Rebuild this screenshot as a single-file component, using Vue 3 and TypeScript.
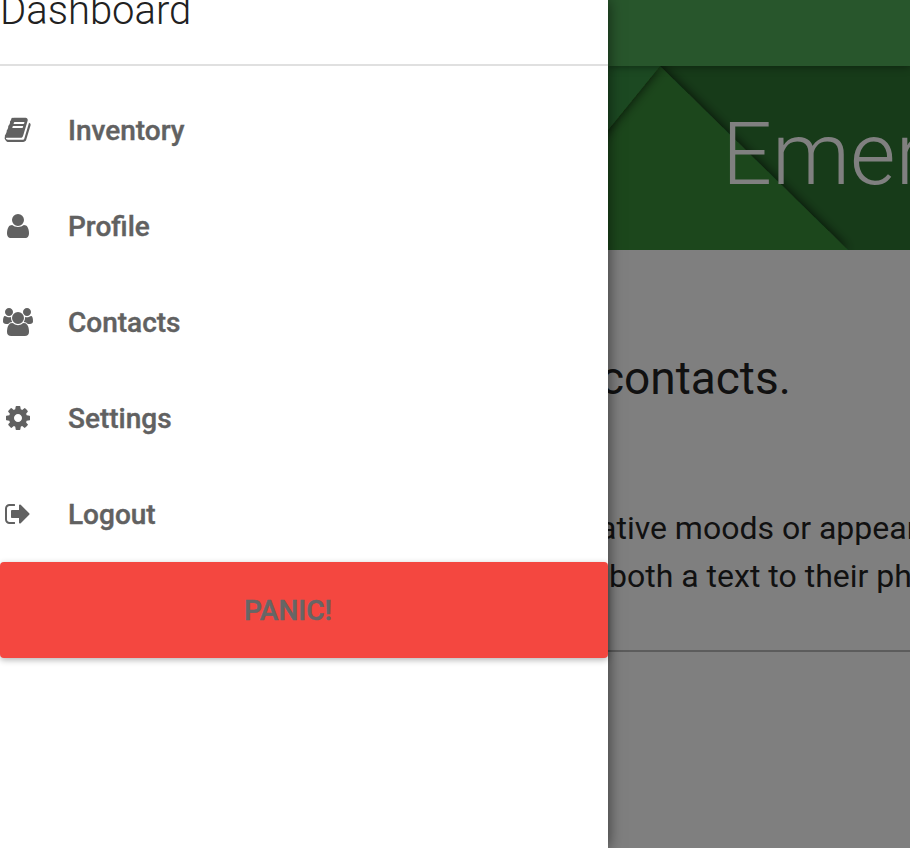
<script setup lang="ts">
interface NavItem {
  label: string;
  viewBox: string;
  path: string;
}

const navItems: NavItem[] = [
  {
    label: "Inventory",
    viewBox: "-40 0 1792 1792",
    path: "M1639 478q40 57 18 129l-275 906q-19 64-76.5 107.5t-122.5 43.5h-923q-77 0-148.5-53.5t-99.5-131.5q-24-67-2-127 2-30 7-64 2-20-1-41 2-11 8-21l33-47q23-38 45-91.5t30-91.5q3-10 .5-30t-.5-28q3-11 17-28t17-23q21-36 42-92t25-90q1-9-2.5-32t.5-28q4-13 22-30.5t22-22.5q19-26 42.5-84.5t27.5-96.5q1-8-3-25.5t-2-26.5q2-8 9-18t18-23 17-21q8-12 16.5-35.5t15-45 17-46.5 22-35.5 30-15.5 45 5.5l-1 3q38-9 51-9h761q74 0 114 56t18 130l-274 906q-36 119-71.5 153.5t-128.5 34.5h-869q-27 0-38 15-11 16-1 43 24 70 144 70h923q29 0 56-15.5t35-41.5l300-987q7-22 5-57 38 15 59 43zm-1064 2q-4 13 2 22.5t20 9.5h608q13 0 25.5-9.5t16.5-22.5l21-64q4-13-2-22.5t-20-9.5h-608q-13 0-25.5 9.5t-16.5 22.5zm-83 256q-4 13 2 22.5t20 9.5h608q13 0 25.5-9.5t16.5-22.5l21-64q4-13-2-22.5t-20-9.5h-608q-13 0-25.5 9.5t-16.5 22.5z",
  },
  {
    label: "Profile",
    viewBox: "0 0 1792 1792",
    path: "M1600 1399q0 109-62.5 187t-150.5 78h-982q-88 0-150.5-78t-62.5-187q0-85 8.5-160.5t31.5-152 58.5-131 94-89 134.5-34.5q150 128 377 128t377-128q76 0 134.5 34.5t94 89 58.5 131 31.5 152 8.5 160.5zm-320-887q0 159-112.5 271.5t-271.5 112.5-271.5-112.5-112.5-271.5 112.5-271.5 271.5-112.5 271.5 112.5 112.5 271.5z",
  },
  {
    label: "Contacts",
    viewBox: "0 0 1920 1792",
    path: "M593 896q-162 5-265 128h-134q-82 0-138-40.5t-56-118.5q0-353 124-353 6 0 43.5 21t97.5 42.5 119 21.5q67 0 133-23-5 37-5 66 0 139 81 256zm1071 637q0 120-73 189.5t-194 69.5h-874q-121 0-194-69.5t-73-189.5q0-53 3.5-103.5t14-109 26.5-108.5 43-97.5 62-81 85.5-53.5 111.5-20q10 0 43 21.5t73 48 107 48 135 21.5 135-21.5 107-48 73-48 43-21.5q61 0 111.5 20t85.5 53.5 62 81 43 97.5 26.5 108.5 14 109 3.5 103.5zm-1024-1277q0 106-75 181t-181 75-181-75-75-181 75-181 181-75 181 75 75 181zm704 384q0 159-112.5 271.5t-271.5 112.5-271.5-112.5-112.5-271.5 112.5-271.5 271.5-112.5 271.5 112.5 112.5 271.5zm576 225q0 78-56 118.5t-138 40.5h-134q-103-123-265-128 81-117 81-256 0-29-5-66 66 23 133 23 59 0 119-21.5t97.5-42.5 43.5-21q124 0 124 353zm-128-609q0 106-75 181t-181 75-181-75-75-181 75-181 181-75 181 75 75 181z",
  },
  {
    label: "Settings",
    viewBox: "0 0 1792 1792",
    path: "M1152 896q0-106-75-181t-181-75-181 75-75 181 75 181 181 75 181-75 75-181zm512-109v222q0 12-8 23t-20 13l-185 28q-19 54-39 91 35 50 107 138 10 12 10 25t-9 23q-27 37-99 108t-94 71q-12 0-26-9l-138-108q-44 23-91 38-16 136-29 186-7 28-36 28h-222q-14 0-24.5-8.5t-11.5-21.5l-28-184q-49-16-90-37l-141 107q-10 9-25 9-14 0-25-11-126-114-165-168-7-10-7-23 0-12 8-23 15-21 51-66.5t54-70.5q-27-50-41-99l-183-27q-13-2-21-12.5t-8-23.5v-222q0-12 8-23t19-13l186-28q14-46 39-92-40-57-107-138-10-12-10-24 0-10 9-23 26-36 98.5-107.5t94.5-71.5q13 0 26 10l138 107q44-23 91-38 16-136 29-186 7-28 36-28h222q14 0 24.5 8.5t11.5 21.5l28 184q49 16 90 37l142-107q9-9 24-9 13 0 25 10 129 119 165 170 7 8 7 22 0 12-8 23-15 21-51 66.5t-54 70.5q26 50 41 98l183 28q13 2 21 12.5t8 23.5z",
  },
  {
    label: "Logout",
    viewBox: "0 0 1792 1792",
    path: "M704 1440q0 4 1 20t.5 26.5-3 23.5-10 19.5-20.5 6.5h-320q-119 0-203.5-84.5t-84.5-203.5v-704q0-119 84.5-203.5t203.5-84.5h320q13 0 22.5 9.5t9.5 22.5q0 4 1 20t.5 26.5-3 23.5-10 19.5-20.5 6.5h-320q-66 0-113 47t-47 113v704q0 66 47 113t113 47h312l11.5 1 11.5 3 8 5.5 7 9 2 13.5zm928-544q0 26-19 45l-544 544q-19 19-45 19t-45-19-19-45v-288h-448q-26 0-45-19t-19-45v-384q0-26 19-45t45-19h448v-288q0-26 19-45t45-19 45 19l544 544q19 19 19 45z",
  },
];
</script>

<template>
  <div class="page">
    <aside class="drawer">
      <header class="drawer-header">
        <h1>Dashboard</h1>
      </header>
      <nav class="nav">
        <a v-for="item in navItems" :key="item.label" class="nav-item">
          <span class="nav-icon">
            <svg :viewBox="item.viewBox" height="28" fill="currentColor" aria-hidden="true">
              <path :d="item.path" />
            </svg>
          </span>
          {{ item.label }}
        </a>
      </nav>
      <button class="panic" type="button">PANIC!</button>
    </aside>

    <main class="main">
      <div class="toolbar"></div>
      <section class="hero">
        <svg class="hero-facets" viewBox="0 0 302 184" aria-hidden="true">
          <defs>
            <filter id="facet-shadow" x="-20%" y="-20%" width="140%" height="140%">
              <feDropShadow dx="0" dy="0" stdDeviation="6" flood-color="#000" flood-opacity="0.8" />
            </filter>
          </defs>
          <rect width="302" height="184" fill="#173b19" />
          <polygon points="-20,-10 52,0 240,184 -20,184" fill="#1c461f" filter="url(#facet-shadow)" />
          <polygon points="-20,-10 52,0 0,64 -20,88" fill="#1e4a21" filter="url(#facet-shadow)" />
        </svg>
        <h2 class="hero-title">Emer</h2>
      </section>
      <section class="content">
        <h3 class="lead">contacts.</h3>
        <p class="copy first">ative moods or appearance</p>
        <p class="copy second">both a text to their phone</p>
        <hr class="rule" />
      </section>
    </main>
  </div>
</template>

<style scoped>
.page {
  display: flex;
  width: 910px;
  height: 848px;
  overflow: hidden;
  font-family: Roboto, "Liberation Sans", sans-serif;
}

.drawer {
  position: relative;
  z-index: 2;
  flex: 0 0 608px;
  display: flex;
  flex-direction: column;
  background: #fff;
  box-shadow: 0 0 14px rgba(0, 0, 0, 0.6);
}

.drawer-header {
  display: flex;
  align-items: flex-end;
  height: 64px;
  border-bottom: 2px solid #e0e0e0;
  overflow: hidden;
}

.drawer-header h1 {
  flex: none;
  margin: 0 0 30px;
  font-size: 40px;
  font-weight: 300;
  line-height: 46px;
  color: #212121;
}

.nav {
  display: flex;
  flex-direction: column;
  padding-top: 16px;
}

.nav-item {
  display: flex;
  align-items: center;
  height: 96px;
  font-size: 28px;
  font-weight: 500;
  color: #616161;
  -webkit-text-stroke: 0.4px #616161;
}

.nav-icon {
  display: flex;
  justify-content: center;
  width: 36px;
  margin-right: 32px;
}

.panic {
  height: 96px;
  padding: 0 32px 0 0;
  border: 0;
  border-radius: 4px;
  background: #f44740;
  box-shadow: 0 2px 6px rgba(0, 0, 0, 0.3);
  font: 500 28px Roboto, "Liberation Sans", sans-serif;
  color: #666;
  -webkit-text-stroke: 0.5px #666;
}

.main {
  flex: 1;
  min-width: 0;
  display: flex;
  flex-direction: column;
  overflow: hidden;
  background: #7f7f7f;
}

.toolbar {
  position: relative;
  z-index: 1;
  height: 66px;
  background: #28562c;
  box-shadow: 0 1px 8px rgba(0, 0, 0, 0.4);
}

.hero {
  position: relative;
  height: 184px;
  overflow: hidden;
  background: #173b19;
}

.hero-facets {
  position: absolute;
  inset: 0;
  width: 100%;
  height: 100%;
}

.hero-title {
  position: relative;
  margin: 0;
  padding: 36px 0 0 114px;
  font-size: 88px;
  font-weight: 300;
  line-height: 104px;
  color: #808080;
  white-space: nowrap;
}

.content {
  display: flex;
  flex-direction: column;
  white-space: nowrap;
  color: #111;
}

.lead {
  margin: 96px 0 0 -8px;
  font-size: 46px;
  font-weight: 400;
  line-height: 64px;
}

.copy {
  margin: 0;
  font-size: 32px;
  line-height: 48px;
}

.copy.first {
  margin: 94px 0 0 -9px;
}

.copy.second {
  margin-left: 1px;
}

.rule {
  width: 100%;
  height: 2px;
  margin: 50px 0 0;
  border: 0;
  background: #5c5c5c;
}
</style>
